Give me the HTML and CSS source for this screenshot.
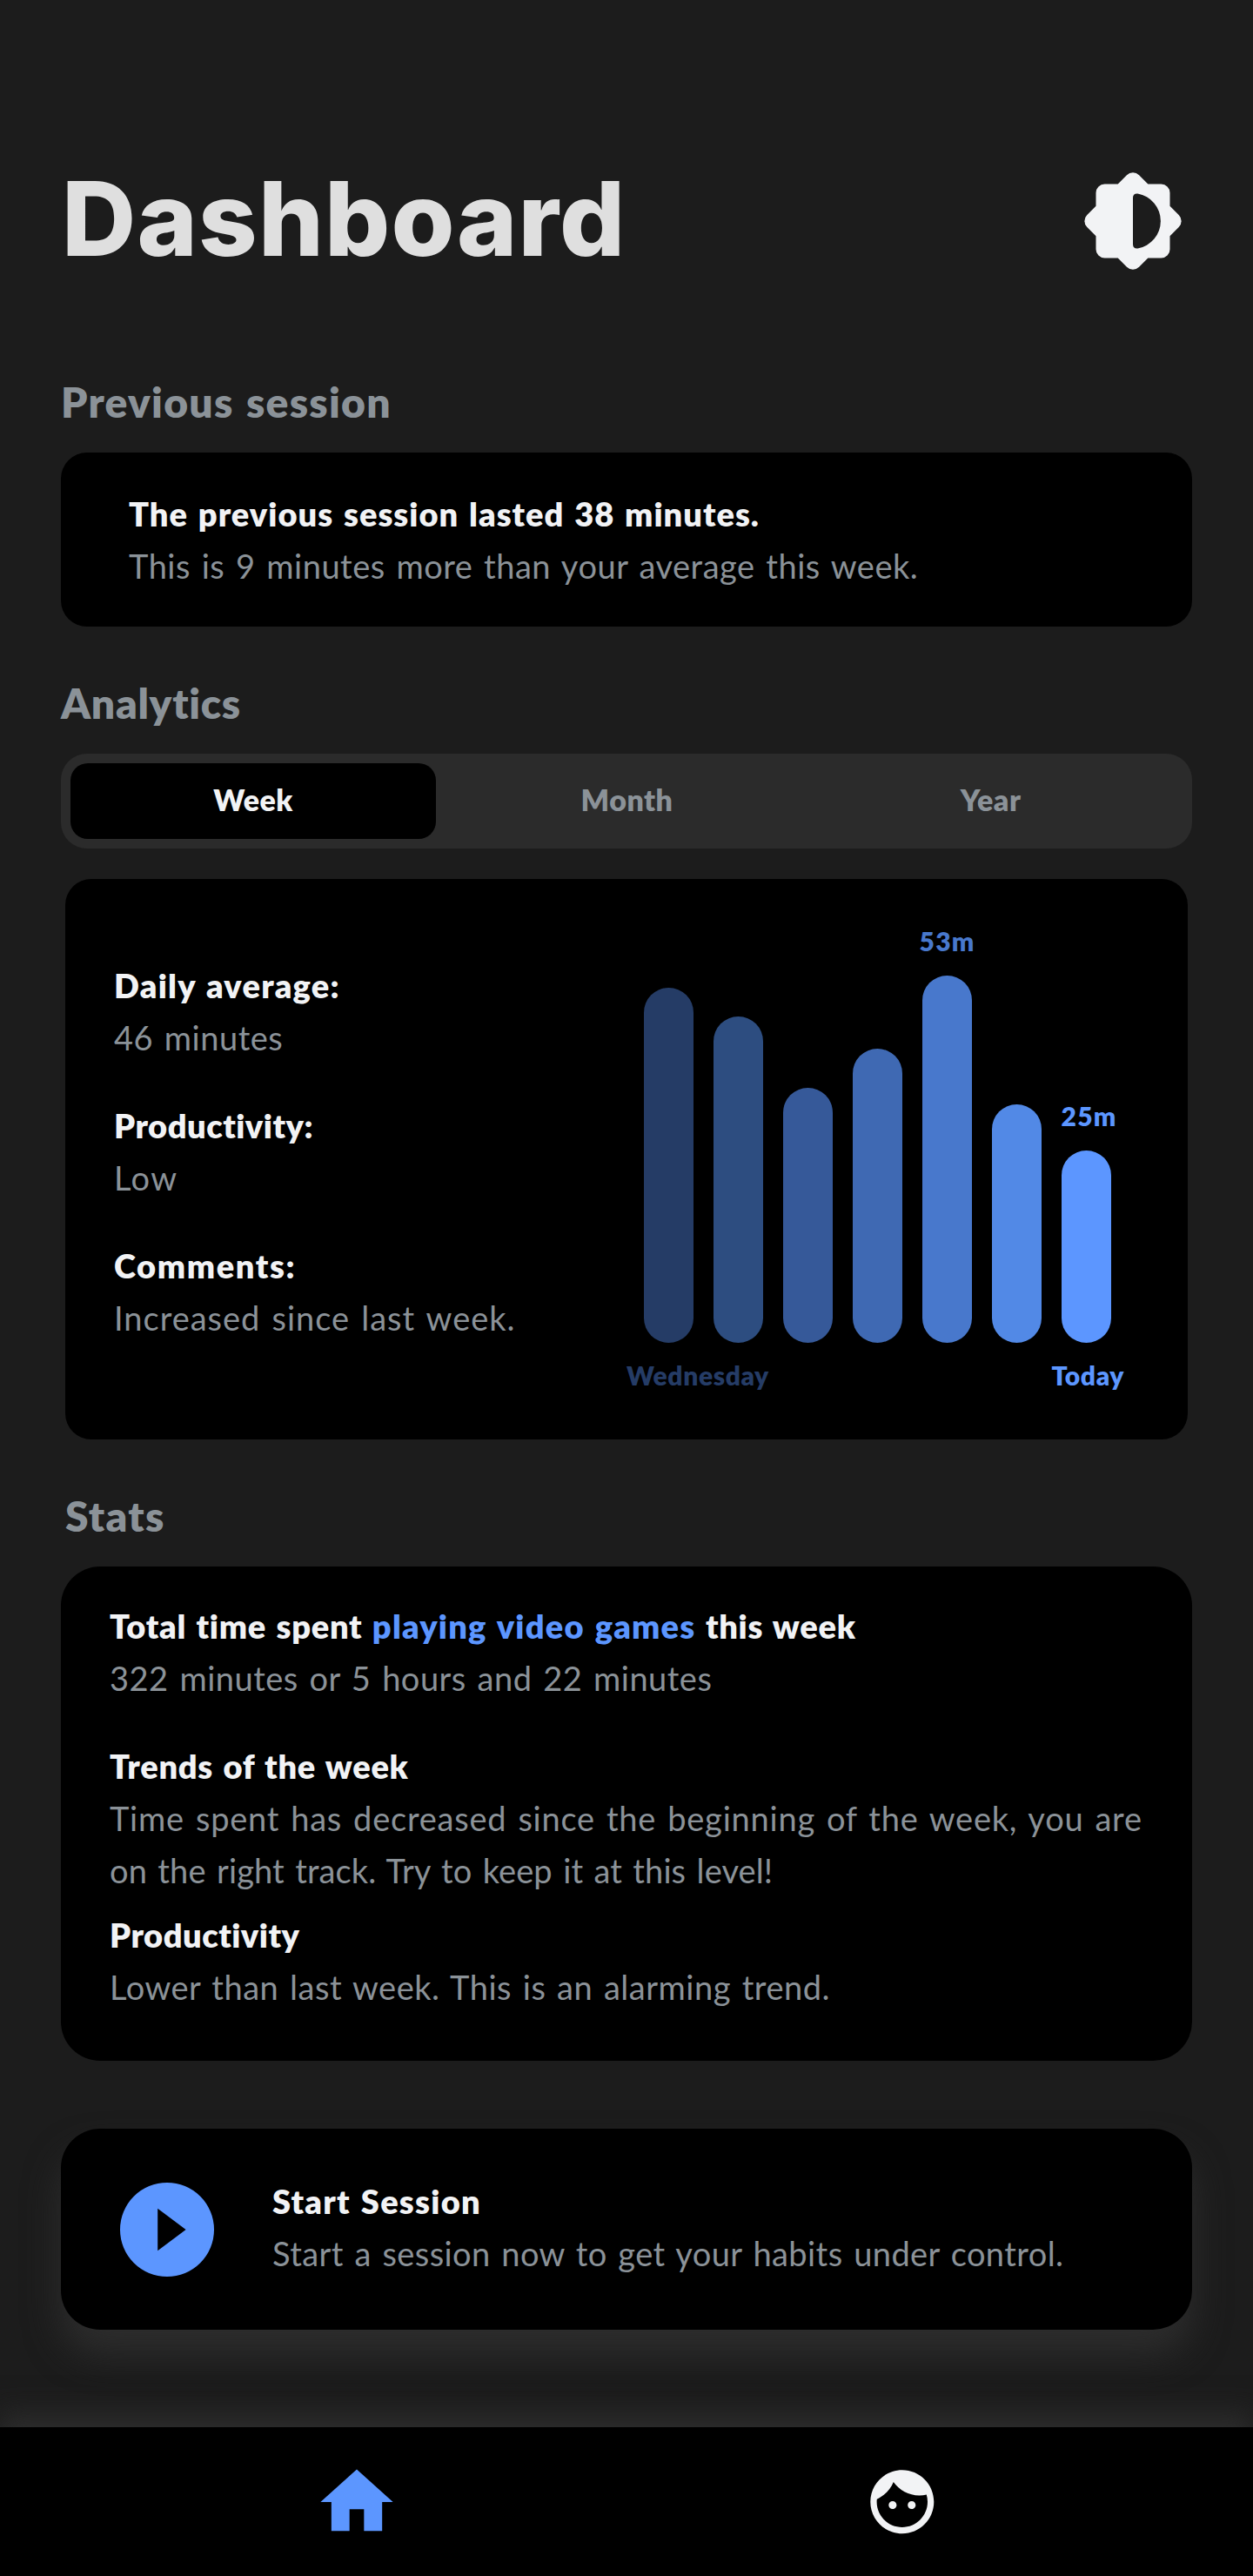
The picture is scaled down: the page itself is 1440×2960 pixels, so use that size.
FILE: index.html
```
<!DOCTYPE html>
<html lang="en">
<head>
<meta charset="utf-8">
<title>Dashboard</title>
<link rel="stylesheet" href="styles.css">
</head>
<body>
<main class="page">
  <header class="header">
    <h1 class="title">Dashboard</h1>
    <svg class="theme-icon" viewBox="-56 -56 112 112" aria-hidden="true">
      <path fill="#f2f3f5" fill-rule="evenodd" d="M-17.3 -42.5L-7.07 -52.7A10 10 0 0 1 7.07 -52.7L17.3 -42.5H32.5A10 10 0 0 1 42.5 -32.5V-17.3L52.7 -7.07A10 10 0 0 1 52.7 7.07L42.5 17.3V32.5A10 10 0 0 1 32.5 42.5H17.3L7.07 52.7A10 10 0 0 1 -7.07 52.7L-17.3 42.5H-32.5A10 10 0 0 1 -42.5 32.5V17.3L-52.7 7.07A10 10 0 0 1 -52.7 -7.07L-42.5 -17.3V-32.5A10 10 0 0 1 -32.5 -42.5ZM0 -26.5V26.5Q0 32 5.5 31.5A32 32 0 0 0 5.5 -31.5Q0 -32 0 -26.5Z"/>
    </svg>
  </header>

  <h2 class="heading">Previous session</h2>
  <section class="card card-previous">
    <p class="strong">The previous session lasted 38 minutes.</p>
    <p class="muted">This is 9 minutes more than your average this week.</p>
  </section>

  <h2 class="heading heading-analytics">Analytics</h2>
  <nav class="segments">
    <span class="segment segment-active">Week</span>
    <span class="segment">Month</span>
    <span class="segment">Year</span>
  </nav>
  <section class="card card-analytics">
    <div class="facts">
      <div>
        <p class="strong wide">Daily average:</p>
        <p class="muted">46 minutes</p>
      </div>
      <div>
        <p class="strong tight">Productivity:</p>
        <p class="muted wider">Low</p>
      </div>
      <div>
        <p class="strong widest">Comments:</p>
        <p class="muted loose">Increased since last week.</p>
      </div>
    </div>
    <div class="chart">
      <div class="bars">
        <div class="slot tone-1"><i class="bar" style="height:408px"></i></div>
        <div class="slot tone-2"><i class="bar" style="height:375px"></i></div>
        <div class="slot tone-3"><i class="bar" style="height:293px"></i></div>
        <div class="slot tone-4"><i class="bar" style="height:338px"></i></div>
        <div class="slot tone-5"><b class="value">53m</b><i class="bar" style="height:422px"></i></div>
        <div class="slot tone-6"><i class="bar" style="height:274px"></i></div>
        <div class="slot tone-7"><b class="value value-today">25m</b><i class="bar" style="height:221px"></i></div>
      </div>
      <div class="axis"><span class="tone-1">Wednesday</span><span class="tone-7">Today</span></div>
    </div>
  </section>

  <h2 class="heading heading-stats">Stats</h2>
  <section class="card card-stats">
    <div class="stat">
      <p class="strong even">Total time spent <span class="accent">playing video games</span> this week</p>
      <p class="muted">322 minutes or 5 hours and 22 minutes</p>
    </div>
    <div class="stat stat-trends">
      <p class="strong even">Trends of the week</p>
      <p class="muted"><span class="trend-first">Time spent has decreased since the beginning of the week, you are</span> <span class="trend-rest">on the right track. Try to keep it at this level!</span></p>
    </div>
    <div class="stat stat-productivity">
      <p class="strong tight">Productivity</p>
      <p class="muted">Lower than last week. This is an alarming trend.</p>
    </div>
  </section>

  <section class="card card-start">
    <svg class="play-icon" viewBox="2 2 20 20" aria-hidden="true"><path fill="#5c96ff" fill-rule="evenodd" d="M12 2a10 10 0 1 0 0 20 10 10 0 0 0 0-20zM10 16.5v-9l6 4.5z"/></svg>
    <div class="start-text">
      <p class="strong wide">Start Session</p>
      <p class="muted snug">Start a session now to get your habits under control.</p>
    </div>
  </section>
</main>
<nav class="tabbar">
  <svg class="tab-home" viewBox="0 0 24 24" aria-hidden="true"><path fill="#5c96ff" d="M10 20v-6h4v6h5v-8h3L12 3 2 12h3v8z"/></svg>
  <svg class="tab-profile" viewBox="0 0 24 24" aria-hidden="true"><path fill="#f2f3f5" d="M9 11.75c-.69 0-1.25.56-1.25 1.25s.56 1.25 1.25 1.25 1.25-.56 1.25-1.25-.56-1.25-1.25-1.25zm6 0c-.69 0-1.25.56-1.25 1.25s.56 1.25 1.25 1.25 1.25-.56 1.25-1.25-.56-1.25-1.25-1.25zM12 2C6.48 2 2 6.48 2 12s4.48 10 10 10 10-4.48 10-10S17.52 2 12 2zm0 18c-4.41 0-8-3.59-8-8 0-.29.02-.58.05-.86 2.36-1.05 4.23-2.98 5.21-5.37C11.07 8.33 14.05 10 17.42 10c.78 0 1.53-.09 2.25-.26.21.71.33 1.47.33 2.26 0 4.41-3.59 8-8 8z"/></svg>
</nav>
</body>
</html>
```
FILE: styles.css
```
* { box-sizing: border-box; margin: 0; padding: 0; }

body {
  background: #1c1c1c;
  font-family: Lato, "Open Sans", sans-serif;
  font-size: 38px;
  line-height: 60px;
  color: #f2f3f5;
}

.page { padding: 181px 70px 112px; }

.header {
  display: flex;
  justify-content: space-between;
  align-items: flex-start;
  height: 140px;
  margin-bottom: 111px;
  padding: 0 12px 0 1px;
}
.title {
  font: 800 118px/140px Inter, sans-serif;
  letter-spacing: 1.2px;
  color: #dfdfdf;
}
.theme-icon { width: 112px; height: 112px; margin-top: 17px; }

.heading {
  font-size: 48px;
  line-height: 60px;
  font-weight: 800;
  letter-spacing: 1.25px;
  word-spacing: 2px;
  color: #8b9298;
  margin-bottom: 28px;
}
.heading-analytics { letter-spacing: .7px; margin-top: 58px; }
.heading-stats { letter-spacing: 1.3px; margin-top: 58px; padding-left: 5px; }

.card { background: #000; border-radius: 30px; }

.strong { font-weight: 800; letter-spacing: 1.02px; word-spacing: 2px; }
.muted { color: #8b9298; letter-spacing: .51px; word-spacing: 2.5px; }
.tight { letter-spacing: .5px; }
.even { letter-spacing: .72px; }
.snug { letter-spacing: .42px; }
.loose { letter-spacing: .98px; }
.wide { letter-spacing: 1.25px; }
.wider { letter-spacing: 1.4px; }
.widest { letter-spacing: 1.6px; }

.card-previous { padding: 40px 78px; }

.segments {
  display: grid;
  grid-template-columns: 420px 439px 397px;
  height: 109px;
  padding: 11px;
  margin-bottom: 35px;
  border-radius: 30px;
  background: #2b2b2b;
}
.segment {
  border-radius: 20px;
  text-align: center;
  font-size: 34px;
  line-height: 84px;
  font-weight: 800;
  letter-spacing: .5px;
  color: #8b9298;
}
.segment-active { background: #000; color: #f2f3f5; }

.card-analytics {
  display: flex;
  justify-content: space-between;
  align-items: flex-end;
  height: 644px;
  margin: 0 5px;
  padding: 0 73px 57px 56px;
}
.facts {
  display: flex;
  flex-direction: column;
  gap: 41px;
  align-self: flex-start;
  padding-top: 92px;
}
.chart { width: 572px; }
.bars {
  display: flex;
  align-items: flex-end;
  gap: 23px;
  padding-left: 20px;
}
.slot {
  display: flex;
  flex-direction: column;
  align-items: center;
  width: 57px;
}
.bar { display: block; width: 57px; border-radius: 29px; background: currentColor; }
.value {
  font-size: 30px;
  line-height: 34px;
  font-weight: 800;
  letter-spacing: 1.2px;
  margin-bottom: 23px;
}
.value-today { padding-left: 6px; }
.axis {
  display: flex;
  justify-content: space-between;
  margin-top: 20px;
  font-size: 30px;
  line-height: 34px;
  font-weight: 800;
  letter-spacing: .6px;
}
.tone-1 { color: #253c66; }
.tone-2 { color: #2d4d80; }
.tone-3 { color: #365999; }
.tone-4 { color: #3f69b3; }
.tone-5 { color: #4878cc; }
.tone-6 { color: #5289e6; }
.tone-7 { color: #5c96ff; }

.card-stats {
  height: 568px;
  padding: 38px 50px 0 56px;
  border-radius: 45px;
}
.stat-trends { margin-top: 41px; }
.stat-productivity { margin-top: 14px; }
.accent { color: #5c96ff; letter-spacing: 1.2px; }
.trend-first { letter-spacing: .78px; }
.trend-rest { letter-spacing: .12px; }

.card-start {
  display: flex;
  align-items: center;
  gap: 67px;
  height: 231px;
  margin-top: 78px;
  padding: 0 68px;
  border-radius: 45px;
  box-shadow: 0 28px 40px #2d2d2d;
}
.play-icon { width: 108px; height: 108px; }
.start-text { padding-bottom: 6px; }

.tabbar {
  display: grid;
  grid-template-columns: 1fr 1fr;
  place-items: center;
  height: 171px;
  padding: 0 90px 0 97px;
  background: #000;
  box-shadow: 0 -15px 30px #2d2d2d;
}
.tab-home { width: 100px; height: 100px; }
.tab-profile { width: 87.6px; height: 87.6px; }
```
